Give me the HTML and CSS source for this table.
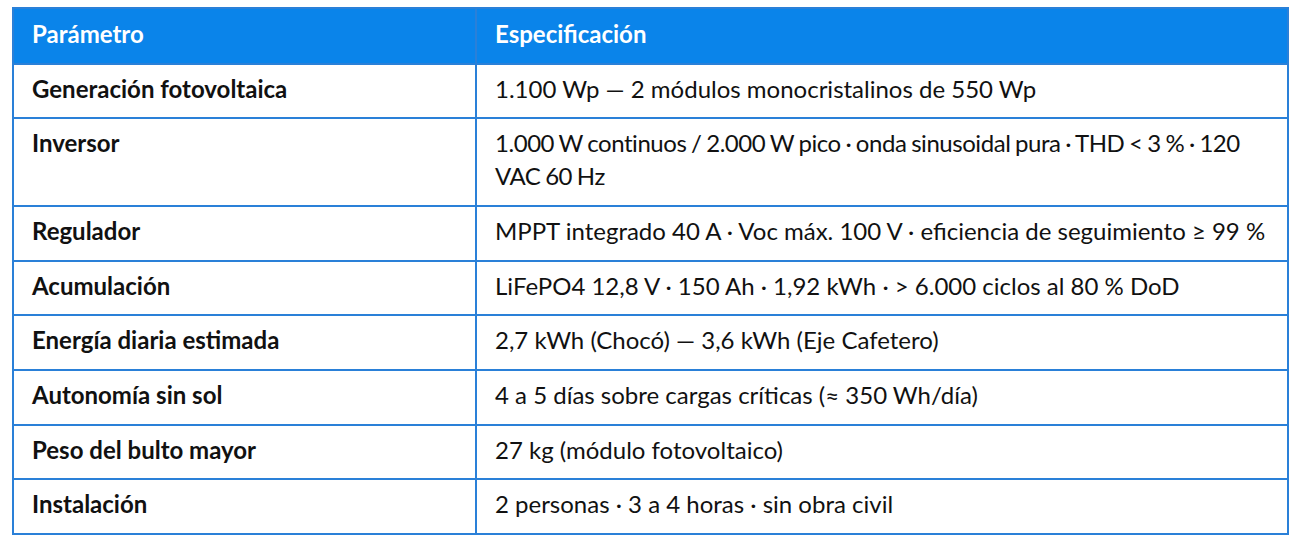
FILE: index.html
```html
<!DOCTYPE html>
<html lang="es">
<head>
<meta charset="utf-8">
<title>Especificaciones</title>
<link rel="stylesheet" href="styles.css">
</head>
<body>
<table class="spec">
  <thead>
    <tr><th class="col-param">Parámetro</th><th>Especificación</th></tr>
  </thead>
  <tbody>
    <tr><td class="param">Generación fotovoltaica</td><td>1.100 Wp — 2 módulos monocristalinos de 550 Wp</td></tr>
    <tr><td class="param">Inversor</td><td class="tight">1.000 W continuos / 2.000 W pico · onda sinusoidal pura · THD &lt; 3 % · 120 VAC 60 Hz</td></tr>
    <tr><td class="param">Regulador</td><td>MPPT integrado 40 A · Voc máx. 100 V · eficiencia de seguimiento ≥ 99 %</td></tr>
    <tr><td class="param">Acumulación</td><td>LiFePO4 12,8 V · 150 Ah · 1,92 kWh · &gt; 6.000 ciclos al 80 % DoD</td></tr>
    <tr><td class="param">Energía diaria estimada</td><td>2,7 kWh (Chocó) — 3,6 kWh (Eje Cafetero)</td></tr>
    <tr><td class="param">Autonomía sin sol</td><td>4 a 5 días sobre cargas críticas (≈ 350 Wh/día)</td></tr>
    <tr><td class="param">Peso del bulto mayor</td><td>27 kg (módulo fotovoltaico)</td></tr>
    <tr><td class="param">Instalación</td><td>2 personas · 3 a 4 horas · sin obra civil</td></tr>
  </tbody>
</table>
</body>
</html>
```
FILE: styles.css
```css
html, body {
  margin: 0;
  background: #ffffff;
}
body {
  padding: 7px 11px 0 12px;
  font-family: Lato, "Open Sans", "Liberation Sans", sans-serif;
  font-size: 24px;
  color: #111111;
}
.spec {
  width: 1277px;
  border-collapse: collapse;
  border: 2px solid #2a80d8;
}
.spec th, .spec td {
  border: 2px solid #2a80d8;
  text-align: left;
  vertical-align: top;
  line-height: 32.7px;
  padding: 8px 12px 12px 18px;
}
.spec th {
  background: #0a84ea;
  color: #ffffff;
  font-weight: 700;
  padding-top: 9px;
  padding-bottom: 12px;
}
.col-param {
  width: 431px;
}
.param {
  font-weight: 700;
}
.tight {
  letter-spacing: -0.45px;
  word-spacing: -1px;
}
```
